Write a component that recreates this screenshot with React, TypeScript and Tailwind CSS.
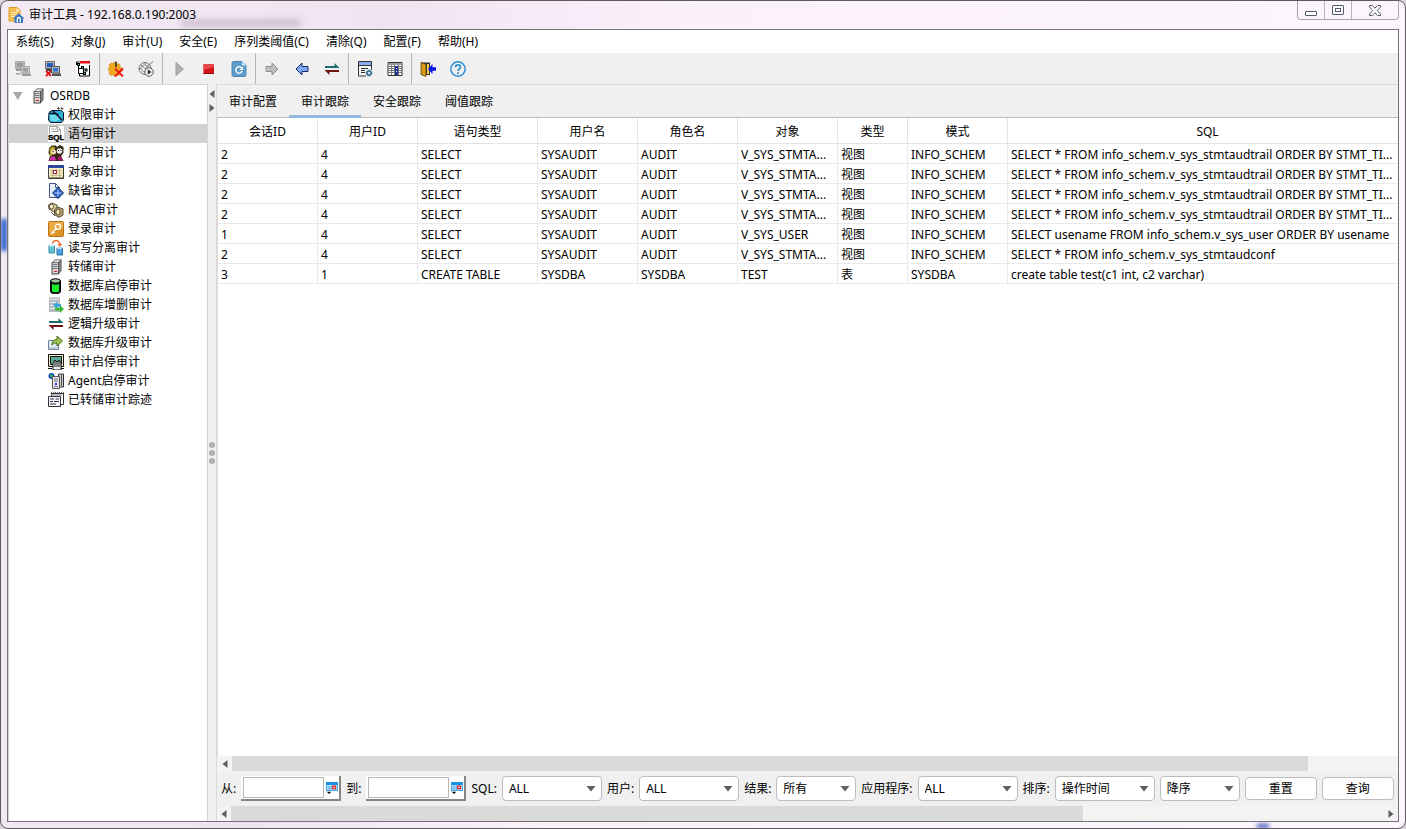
import React, { useState } from "react";

type IconProps = { name: string; size?: number };

const ServerTower = () => (
  <g>
    <path d="M4 3.500 7 .5h6.500v11l-3 4H3.500v-12z" fill="#444" />
    <path d="M4.500 4h5.500v10.500h-5.500z" fill="#d4d4d4" />
    <path d="M5 3.200 7.300 1.200h5.200l-2.200 2z" fill="#eee" />
    <path d="M10.700 4l2.200-2.200v9.400l-2.200 3z" fill="#808080" />
    <path d="M5 5.500h4.500M5 7.500h4.500M5 9.500h4.500" stroke="#777" />
    <path d="M6 12.500h3" stroke="#e02020" />
  </g>
);

const Swap = () => (
  <g>
    <path d="M1 5h9.500V2L15.500 7H1z" fill="#1d6b6b" />
    <path d="M15 9H.5l5 5v-3H15z" fill="#6b1717" />
  </g>
);

const Monitors = ({ off = false }: { off?: boolean }) => (
  <g>
    <path d="M.5.5h9v7h-9z" fill="#b8b8b8" stroke={off ? "#aaa" : "#666"} />
    <path d="M2 2h6v4H2z" fill={off ? "#999" : "#1e5bc4"} />
    <path d="M1 8h8v2H1z" fill={off ? "#999" : "#444"} />
    <path d="M6.500 5.500h8v6.500h-8z" fill={off ? "#c4c4c4" : "#bbb"} stroke={off ? "#aaa" : "#555"} />
    <path d="M8 7h5v3.500H8z" fill={off ? "#9f9f9f" : "#2d72dc"} />
    <path d="M7 12.500h9v2.500H7z" fill={off ? "#999" : "#555"} />
    {off ? (
      <path d="M1 12h5v1.500H1z" fill="#aaa" />
    ) : (
      <path d="M1 10l5 5M6 10l-5 5" stroke="#e01010" strokeWidth="1.800" />
    )}
  </g>
);

const drawings: Record<string, React.ReactNode> = {
  app: (
    <g>
      <path d="M1 .5h8l3 3V14H1z" fill="#f6bf4d" stroke="#e09a28" />
      <path d="M8.500 1v3.500H12z" fill="#fff1cc" />
      <path d="M3 5.500h6M3 7.500h6M3 9.500h4" stroke="#fde9b8" />
      <path d="M5.500 11l5.200-4.800L16 11l-1 1v4H6.500v-4z" fill="#3a77bd" />
      <path d="M9.300 15.500V12c0-2 3-2 3 0v3.500" fill="none" stroke="#fff" strokeWidth="1.300" />
    </g>
  ),
  disconnected: <Monitors off />,
  disconnect: <Monitors />,
  tree: (
    <g>
      <path d="M1 1h14v14.500H4V13H1z" fill="#fff" />
      <path d="M4.500 1H1.500v3M14.500 4v11h-10v-3" fill="none" stroke="#000" />
      <path d="M5 0h10v2.500H5z" fill="#e81010" />
      <path d="M3.500 4v8.500H8M3.500 7.500H6M8.500 6.500v5.500" fill="none" stroke="#000" />
      <path d="M2 2h3v3H2zM6 5h3v3H6zM9.500 7.500h3v3h-3zM8 11h3v3H8z" fill="#000" />
      <path d="M3 3h1v1H3zM7 6h1v1H7zM10.500 8.500h1v1h-1zM9 12h1v1H9z" fill="#38d8a0" />
    </g>
  ),
  gearDelete: (
    <g>
      <path d="M5.500 1.500h3v2l2-1 2 2-1 2 3 .5v3l-3 .5 1 2-2 2-2-1-1 1.500H6L5 13.500l-2 1-2-2 1-2-1.500-1V7L2 6 1 4l2-2 2 1z" fill="#efa91e" stroke="#cc820c" strokeWidth=".6" />
      <path d="M8 .5v5.500" stroke="#333" strokeWidth="1.600" />
      <path d="M7 7.500l8 8M15 7.500l-8 8" stroke="#ed1515" strokeWidth="1.800" />
    </g>
  ),
  gearRun: (
    <g fill="none" stroke="#777">
      <circle cx="7" cy="7.500" r="6" fill="#e6e6e6" />
      <circle cx="7" cy="7.500" r="3.500" fill="#fafafa" stroke="#999" />
      <path d="M3 4l4 3.500L15 .5M7 1.500v2M1 7.500h2" />
      <circle cx="11" cy="11" r="4.200" fill="#f5f5f5" stroke="#555" />
      <path d="M9.800 8.500v5l3.700-2.500z" fill="#222" stroke="none" />
    </g>
  ),
  play: <path d="M5 1.500v13L12.500 8z" fill="#b0b0b0" stroke="#9c9c9c" />,
  stop: (
    <g>
      <path d="M2.500 3h10.500v10H2.500z" fill="#d41515" />
      <path d="M2.500 3H13v3L2.500 9z" fill="#e84848" />
      <path d="M2.500 12H13v1H2.500z" fill="#8e0909" />
    </g>
  ),
  refresh: (
    <g>
      <path d="M1 2A1.500 1.500 0 0 1 2.500.5H11l4 4v9.500a1.500 1.500 0 0 1-1.500 1.500h-11A1.500 1.500 0 0 1 1 14z" fill="#5f9cc9" stroke="#4a86b4" />
      <path d="M11 .5v4h4z" fill="#d6e9f6" />
      <path d="M10.500 7A3.200 3.200 0 1 0 11 10" fill="none" stroke="#fff" strokeWidth="1.400" />
      <path d="M12 5.500V9H8.500z" fill="#fff" />
    </g>
  ),
  next: <path d="M2 5.500h6V2l6 6-6 6v-3.500H2z" fill="#bdbdbd" stroke="#8f8f8f" />,
  prev: <path d="M14 5.500H8V2L2 8l6 6v-3.500h6z" fill="#7fa8ee" stroke="#122a6b" />,
  swap: <Swap />,
  form: (
    <g>
      <path d="M1.500.5h13v14.500h-13z" fill="#f4f4f4" stroke="#333" />
      <path d="M2 1h12v3H2z" fill="#86aef0" />
      <path d="M1.500 4.500h13M4 7.500h7M4 9.500h4M4 11.500h4" stroke="#333" />
      <path d="M9 9h7v7H9z" fill="#f0f0f0" />
      <circle cx="12" cy="12" r="2.200" fill="none" stroke="#45799c" strokeWidth="1.800" />
      <path d="M12 8.500v7M8.500 12h7" stroke="#45799c" />
      <circle cx="12" cy="12" r="1" fill="#fff" />
    </g>
  ),
  grid: (
    <g>
      <path d="M1 1.500h14v13H1z" fill="#fff" stroke="#333" />
      <path d="M1.500 2h13v2h-13z" fill="#999" />
      <path d="M1 5.500h14M1 7.500h14M1 9.500h14M1 11.500h14M4.500 4v10M7.500 4v10M11.500 4v10" stroke="#777" />
      <path d="M8 5h3v9H8z" fill="#1b2e9c" />
      <path d="M9 7h1v1H9zM9 10h1v1H9z" fill="#fff" />
    </g>
  ),
  exit: (
    <g>
      <path d="M1 1.500h9V14H1z" fill="#333" />
      <path d="M1 1.500l5 2v12l-5-2z" fill="#d99b13" stroke="#5c4104" strokeWidth=".8" />
      <path d="M7 3h2v10H7z" fill="#f4ca5a" />
      <path d="M16 6.200h-3.500V3L8 8l4.500 5V9.800H16z" fill="#0713ed" />
    </g>
  ),
  help: (
    <g fill="none" stroke="#2b8fd0">
      <circle cx="8" cy="8" r="7.200" strokeWidth="1.500" />
      <path d="M5.500 6.300c0-3.300 5-3.300 5 0 0 1.800-2.500 1.700-2.500 3.700" strokeWidth="1.700" />
      <path d="M8 11.200v1.800" strokeWidth="1.800" />
    </g>
  ),
  server: <ServerTower />,
  permission: (
    <g>
      <path d="M1 5.500 4 3.500h9.500l2 2V13l-2 2.500h-11L.5 13z" fill="#27b3cf" stroke="#113" />
      <path d="M1.500 8h10v4.500l-4 2-5-1z" fill="#6fdcec" />
      <path d="M5 4l9 9M1.500 6.500h6l3 1.500" stroke="#113" strokeWidth="1.500" fill="none" />
      <path d="M10.500 0v3M9 1.500h3M14 0v3M12.500 1.500h3" stroke="#444" strokeWidth=".8" />
    </g>
  ),
  sql: (
    <g>
      <path d="M0 0h16v16H0z" fill="#fff" />
      <path d="M1.500 8V.5h8l3 3V8" fill="none" stroke="#999" />
      <path d="M9 .5V4h3.500M3.500 3h4M3.500 5.500h7" fill="none" stroke="#999" />
      <text x="0" y="14" fontFamily="Liberation Sans, sans-serif" fontWeight="bold" fontSize="8" stroke="#000" strokeWidth=".4">
        SQL
      </text>
    </g>
  ),
  users: (
    <g>
      <path d="M1 3l3-2.500h4L9 2l3-2 3.500 2v6L13 11l2.500 5H.5L2 11 .5 8z" fill="#332b10" />
      <path d="M1.500 3.500l3.500-2 2 1v2L4 6v5H2z" fill="#b9a527" />
      <circle cx="5.500" cy="7" r="2.500" fill="#f7dfb4" />
      <circle cx="11.500" cy="6" r="2.800" fill="#eee" />
      <path d="M10 5h1v1h-1zM12.500 5h1v1h-1zM4.500 6h1v1h-1z" fill="#111" />
      <path d="M1 15.500l2-4h4l1 4z" fill="#d22cb0" />
      <path d="M9 15.500l1.500-4h3l1.500 4z" fill="#a51c6e" />
    </g>
  ),
  object: (
    <g>
      <path d="M.5 1.500h15v13H.5z" fill="#f5efc6" stroke="#444" />
      <path d="M0 1h16v3H0z" fill="#2c489e" />
      <path d="M2 6.500h12M2 9h12M2 11.500h12M4.500 5v8M8 5v8M11.500 5v8" stroke="#b9ad77" strokeWidth=".7" />
      <path d="M5.500 6.500h3v3h-3z" fill="#fff" stroke="#a01840" />
      <path d="M1 14h14.500V4" fill="none" stroke="#3a3524" />
    </g>
  ),
  defaults: (
    <g>
      <path d="M1.500.5h6l4 4v10h-10z" fill="#e9eefb" stroke="#46568a" />
      <path d="M7.500.5v4h4" fill="none" stroke="#46568a" />
      <path d="M10 4.500l5.500 5.500-5.500 5.500L4.500 10z" fill="#265ec3" stroke="#12306f" />
      <path d="M10 6.500v7M6.500 10h7" stroke="#b9d3ff" />
    </g>
  ),
  mac: (
    <g stroke="#463d2c" strokeWidth=".9">
      <path d="M.5 3l3-2L9 3v5L6 10 1 7z" fill="#dccb93" />
      <ellipse cx="3.500" cy="4.500" rx="2" ry="2.500" fill="#fff6d4" />
      <path d="M6.500 8l3-3L15 7v6l-4 2.500-4.500-3z" fill="#bba66f" />
      <ellipse cx="10" cy="10" rx="2.200" ry="3" fill="#f3e3aa" />
      <path d="M3 10l4 4" stroke="#555" />
    </g>
  ),
  login: (
    <g>
      <rect x=".5" y=".5" width="15" height="15" rx="1" fill="#dc9328" stroke="#b87315" />
      <path d="M1 1h14v6L1 12z" fill="#eca947" />
      <circle cx="10" cy="5.800" r="2.600" fill="none" stroke="#fff" strokeWidth="1.300" />
      <path d="M8.200 7.700L3.500 12.400v1M5 11l1.500 1.500" fill="none" stroke="#fff" strokeWidth="1.300" />
    </g>
  ),
  split: (
    <g>
      <path d="M1 5.500h5.500V13H1z" fill="#65bfd1" stroke="#3c91a8" />
      <ellipse cx="3.700" cy="5.500" rx="2.700" ry="1.200" fill="#c2f0f6" />
      <path d="M9 8h5.500v7H9z" fill="#4aa0df" stroke="#2b74af" />
      <ellipse cx="11.700" cy="8" rx="2.700" ry="1.200" fill="#bbdfff" />
      <path d="M4.500 3.500c1-4 6.500-4 7.500 1" fill="none" stroke="#ed6a24" strokeWidth="1.500" />
      <path d="M9.500 4H14l-2 3z" fill="#ed6a24" />
    </g>
  ),
  dbRun: (
    <g>
      <path d="M2.500 3c0-3 10-3 10 0v10.500c0 3-10 3-10 0z" fill="#111" stroke="#000" />
      <ellipse cx="7.500" cy="2.800" rx="4.200" ry="1.600" fill="#9cc79c" />
      <path d="M4 6c2 1 5 1 7 0v7.500c-2 1-5 1-7 0z" fill="#16ed25" />
    </g>
  ),
  dbEdit: (
    <g>
      <path d="M1 .5h11V15H1z" fill="#b4b7bd" />
      <path d="M2 2.500h9M2 5.500h9M2 8.500h9M2 11.500h9" stroke="#eef0f3" />
      <path d="M5 8l4.500-3.500V7H13v2.500H9.500V12z" fill="#38a5de" />
      <path d="M16 12l-4-3.500V11H7v2.500h5V16z" fill="#35be32" />
    </g>
  ),
  upgrade: (
    <g>
      <path d="M.5 5.500h10v9H.5z" fill="#dfeaf4" stroke="#72849a" />
      <path d="M1 13h9" stroke="#9ab2c8" />
      <path d="M4 10c0-4 2-5.500 5-5.500V1l5.500 5L9 11V8C7 8 5.500 8 4 10z" fill="#9cc650" stroke="#466b17" />
    </g>
  ),
  auditSwitch: (
    <g>
      <path d="M.5.5h15v12H.5z" fill="#f3ecbd" stroke="#111" />
      <path d="M2.500 2.500h11v8h-11z" fill="#58a894" stroke="#111" />
      <path d="M5 16V9l2-3 2 2 2-2 2 3v7z" fill="#eee" stroke="#111" />
      <path d="M7 7v6M9 8v5M11 7v6" fill="none" stroke="#111" />
      <path d="M0 14.500h4M13 14.500h3" fill="none" stroke="#111" />
    </g>
  ),
  agent: (
    <g>
      <circle cx="3.500" cy="3" r="3" fill="#1740d6" />
      <path d="M2 2l2-1 1 2-2 2z" fill="#28c23a" />
      <path d="M10.500 1h5v13h-5z" fill="#ccc" stroke="#333" />
      <path d="M13.500 2v11" stroke="#555" />
      <path d="M4.500 3.500h7v12h-7z" fill="#e6e6ec" stroke="#555" />
      <path d="M6 6h4M6 8h4M6 13.500h4" stroke="#777" />
      <path d="M7 10h2v2H7z" fill="#2233d8" />
    </g>
  ),
  dumped: (
    <g>
      <path d="M3.500 1.500h12v11h-12z" fill="#fff" stroke="#333" />
      <path d="M3 1h13" stroke="#333" strokeWidth="1.500" strokeDasharray="1 1" />
      <path d="M.5 4.500h12v10H.5z" fill="#f4f4ff" stroke="#333" />
      <path d="M2 7h4M7.500 7H11M2 9.500h3M6 9.500h5M2 12h6" stroke="#334" />
      <path d="M3 3h11" stroke="#778" />
    </g>
  ),
  calendar: (
    <g>
      <path d="M0 0h16v12H0z" fill="#1b91e4" />
      <path d="M1 4h14v7H1z" fill="#d8efff" />
      <path d="M1 6.500h14M1 9h14M4 4v7M7.500 4v7M11 4v7" stroke="#4aa6e6" />
      <path d="M9 5.500h3.500V9H9z" fill="#fff" stroke="#e11" strokeWidth="1.500" />
      <path d="M1 13h6l-3 3z" fill="#000" />
    </g>
  ),
};

const Icon: React.FC<IconProps> = ({ name, size = 16 }) => (
  <svg width={size} height={size} viewBox="0 0 16 16" className="shrink-0" aria-hidden="true">
    {drawings[name]}
  </svg>
);

const menus = [
  "系统(S)",
  "对象(J)",
  "审计(U)",
  "安全(E)",
  "序列类阈值(C)",
  "清除(Q)",
  "配置(F)",
  "帮助(H)",
];

const toolGroups = [
  [
    { icon: "disconnected", label: "连接" },
    { icon: "disconnect", label: "断开" },
    { icon: "tree", label: "对象树" },
  ],
  [
    { icon: "gearDelete", label: "删除" },
    { icon: "gearRun", label: "启用" },
  ],
  [
    { icon: "play", label: "开始" },
    { icon: "stop", label: "停止" },
    { icon: "refresh", label: "刷新" },
  ],
  [
    { icon: "next", label: "前进" },
    { icon: "prev", label: "后退" },
    { icon: "swap", label: "切换" },
  ],
  [
    { icon: "form", label: "配置" },
    { icon: "grid", label: "列" },
  ],
  [
    { icon: "exit", label: "退出" },
    { icon: "help", label: "帮助" },
  ],
];

const treeItems = [
  { name: "权限审计", icon: "permission" },
  { name: "语句审计", icon: "sql" },
  { name: "用户审计", icon: "users" },
  { name: "对象审计", icon: "object" },
  { name: "缺省审计", icon: "defaults" },
  { name: "MAC审计", icon: "mac" },
  { name: "登录审计", icon: "login" },
  { name: "读写分离审计", icon: "split" },
  { name: "转储审计", icon: "server" },
  { name: "数据库启停审计", icon: "dbRun" },
  { name: "数据库增删审计", icon: "dbEdit" },
  { name: "逻辑升级审计", icon: "swap" },
  { name: "数据库升级审计", icon: "upgrade" },
  { name: "审计启停审计", icon: "auditSwitch" },
  { name: "Agent启停审计", icon: "agent" },
  { name: "已转储审计踪迹", icon: "dumped" },
];

const tabs = ["审计配置", "审计跟踪", "安全跟踪", "阈值跟踪"];

const columns = [
  { name: "会话ID", width: "w-[100px]" },
  { name: "用户ID", width: "w-[100px]" },
  { name: "语句类型", width: "w-[120px]" },
  { name: "用户名", width: "w-[100px]" },
  { name: "角色名", width: "w-[100px]" },
  { name: "对象", width: "w-[100px]" },
  { name: "类型", width: "w-[70px]" },
  { name: "模式", width: "w-[100px]" },
  { name: "SQL", width: "w-[400px]" },
];

const trailSql = "SELECT * FROM info_schem.v_sys_stmtaudtrail ORDER BY STMT_TI...";
const trailRow = ["2", "4", "SELECT", "SYSAUDIT", "AUDIT", "V_SYS_STMTA...", "视图", "INFO_SCHEM", trailSql];

const rows = [
  trailRow,
  trailRow,
  trailRow,
  trailRow,
  ["1", "4", "SELECT", "SYSAUDIT", "AUDIT", "V_SYS_USER", "视图", "INFO_SCHEM", "SELECT usename FROM info_schem.v_sys_user ORDER BY usename"],
  ["2", "4", "SELECT", "SYSAUDIT", "AUDIT", "V_SYS_STMTA...", "视图", "INFO_SCHEM", "SELECT * FROM info_schem.v_sys_stmtaudconf"],
  ["3", "1", "CREATE TABLE", "SYSDBA", "SYSDBA", "TEST", "表", "SYSDBA", "create table test(c1 int, c2 varchar)"],
];

const Arrow = ({ dir }: { dir: "left" | "right" }) => (
  <svg width="6" height="8" viewBox="0 0 6 8" aria-hidden="true">
    <path d={dir === "left" ? "M5.500 0v8L.5 4z" : "M.5 0v8l5-4z"} fill="#606060" />
  </svg>
);

const DateField = ({ id, label }: { id: string; label: string }) => (
  <>
    <label htmlFor={id}>{label}</label>
    <div className="flex h-[25px] w-[100px] shrink-0 items-center border-b-2 border-r-2 border-[#858585] bg-white pl-0.5">
      <input id={id} className="h-[21px] w-0 flex-1 border border-[#b8b8b8] bg-white px-1 outline-none" />
      <button type="button" aria-label="选择日期" className="flex w-[15px] justify-center">
        <Icon name="calendar" size={12} />
      </button>
    </div>
  </>
);

const Select = ({
  id,
  label,
  value,
  width,
}: {
  id: string;
  label?: string;
  value: string;
  width: string;
}) => (
  <>
    {label ? <label htmlFor={id}>{label}</label> : null}
    <div className={`relative shrink-0 ${width}`}>
      <select
        id={id}
        aria-label={label ? undefined : "排序方向"}
        className="h-[25px] w-full appearance-none rounded border border-[#bdbdbd] bg-white pl-1.5 outline-none"
      >
        <option>{value}</option>
      </select>
      <svg
        width="10"
        height="6"
        viewBox="0 0 10 6"
        className="pointer-events-none absolute right-1.5 top-[10px]"
        aria-hidden="true"
      >
        <path d="M.5 0h9L5 5.500z" fill="#606060" />
      </svg>
    </div>
  </>
);

const TitleBar = () => (
  <div className="relative flex h-7 shrink-0 justify-between">
    <div className="flex items-center gap-[5px] pl-px">
      <Icon name="app" />
      <span>审计工具 - 192.168.0.190:2003</span>
    </div>
    <div className="flex h-[19px] rounded-b border border-t-0 border-[#a8a2ad]">
      <button aria-label="最小化" className="flex w-[27px] items-center justify-center border-r border-[#b9b2bd]">
        <svg width="12" height="5" viewBox="0 0 12 5" className="mt-1.5">
          <rect x=".5" y=".5" width="11" height="4" rx=".5" fill="#fff" stroke="#555a6b" />
        </svg>
      </button>
      <button aria-label="最大化" className="flex w-[27px] items-center justify-center border-r border-[#b9b2bd]">
        <svg width="12" height="10" viewBox="0 0 12 10">
          <rect x=".5" y=".5" width="11" height="9" rx=".5" fill="#fff" stroke="#555a6b" />
          <rect x="3.500" y="3.500" width="5" height="3" fill="#fff" stroke="#555a6b" />
        </svg>
      </button>
      <button aria-label="关闭" className="flex w-[46px] items-center justify-center">
        <svg width="12" height="11" viewBox="0 0 12 11">
          <path
            d="M.5.5h3L6 3.200 8.500.5h3v1.500L8.300 5.500l3.200 3.500v1.500h-3L6 7.800 3.500 10.500h-3V9l3.200-3.500L.5 2z"
            fill="#fff"
            stroke="#555a6b"
          />
        </svg>
      </button>
    </div>
  </div>
);

const App: React.FC = () => {
  const [selected, setSelected] = useState("语句审计");
  const [activeTab, setActiveTab] = useState("审计跟踪");

  return (
    <div className="bg-[#d8d4da] font-['Noto_Sans','Noto_Sans_CJK_SC',sans-serif] text-[12px] leading-4 text-black">
      <div className="relative flex h-screen flex-col overflow-hidden rounded-lg border border-[#5e585f] bg-[linear-gradient(100deg,#f3eaf4_0%,#f0e4f1_25%,#fbf1fb_45%,#fdf6ff_100%)] px-1.5 pb-1.5">
        {/* colour showing through the glass frame */}
        <div className="absolute left-0 top-[218px] h-8 w-1.5 bg-[#2559cf] blur-[2px]" />
        <div className="absolute bottom-0 right-[136px] h-1 w-3 bg-[#3750b5] blur-[2px]" />
        <div className="absolute left-[180px] top-[18px] h-2 w-[120px] bg-[#b9a9bd]/60 blur-[3px]" />

        <TitleBar />

        <div className="relative flex min-h-0 flex-1 flex-col border border-[#77727a] bg-[#f0f0f0]">
          <nav className="flex h-[23px] shrink-0 items-center gap-px bg-white pt-px">
            {menus.map((menu) => (
              <button key={menu} className="whitespace-nowrap px-2">
                {menu}
              </button>
            ))}
          </nav>

          <div className="flex h-[31px] shrink-0">
            {toolGroups.map((group, index) => (
              <React.Fragment key={index}>
                {index > 0 ? <div className="mx-px w-px bg-[#b4b4b4]" /> : null}
                {group.map((tool) => (
                  <button
                    key={tool.icon}
                    aria-label={tool.label}
                    className="flex w-[30px] items-center justify-center"
                  >
                    <Icon name={tool.icon} />
                  </button>
                ))}
              </React.Fragment>
            ))}
          </div>

          <div className="flex min-h-0 flex-1">
            <aside className="w-[200px] shrink-0 border border-b-0 border-[#d4d4d4] bg-white pt-px">
              <div className="flex h-[19px] items-center pl-1">
                <svg width="10" height="8" viewBox="0 0 10 8" aria-hidden="true">
                  <path d="M0 0h9.500L4.800 8z" fill="#a8a8a8" />
                </svg>
                <span className="ml-[7px] mr-1 flex">
                  <Icon name="server" />
                </span>
                OSRDB
              </div>
              {treeItems.map((item) => (
                <button
                  key={item.name}
                  onClick={() => setSelected(item.name)}
                  className={`flex h-[19px] w-full items-center gap-1 pl-[39px] text-left ${
                    selected === item.name ? "bg-[#d2d2d2]" : ""
                  }`}
                >
                  <Icon name={item.icon} />
                  {item.name}
                </button>
              ))}
            </aside>

            <div className="relative flex w-2 shrink-0 flex-col items-center justify-center gap-0.5">
              <div className="absolute left-px top-1.5 flex flex-col gap-1.5">
                <Arrow dir="left" />
                <Arrow dir="right" />
              </div>
              <span className="size-1.5 rounded-full bg-[#b0b0b0]" />
              <span className="size-1.5 rounded-full bg-[#b0b0b0]" />
              <span className="size-1.5 rounded-full bg-[#b0b0b0]" />
            </div>

            <main className="flex min-w-0 flex-1 flex-col border-l border-t border-[#dadada]">
              <div className="flex h-[33px] shrink-0 border-b border-[#bcbcbc]">
                {tabs.map((tab) => (
                  <button
                    key={tab}
                    onClick={() => setActiveTab(tab)}
                    className={`-mb-px w-[72px] border-b-3 pt-[3px] ${
                      activeTab === tab ? "border-[#93b8de]" : "border-transparent"
                    }`}
                  >
                    {tab}
                  </button>
                ))}
              </div>

              <div className="min-h-0 flex-1 overflow-hidden border-l border-[#dadada] bg-white">
                <table className="w-[1190px] table-fixed border-separate border-spacing-0">
                  <thead>
                    <tr className="h-[26px]">
                      {columns.map((column) => (
                        <th
                          key={column.name}
                          className={`border-b border-r border-[#e4e4e4] p-0 pt-0.5 font-normal ${column.width}`}
                        >
                          {column.name}
                        </th>
                      ))}
                    </tr>
                  </thead>
                  <tbody>
                    {rows.map((row, index) => (
                      <tr key={index} className="h-5">
                        {row.map((cell, cellIndex) => (
                          <td
                            key={cellIndex}
                            className="whitespace-nowrap border-b border-r border-[#e9e9e9] pb-0 pl-[3px] pr-0 pt-0.5"
                          >
                            {cell}
                          </td>
                        ))}
                      </tr>
                    ))}
                  </tbody>
                </table>
              </div>

              <div className="flex h-[15px] shrink-0 bg-[#f3f3f3]">
                <button aria-label="向左滚动" className="flex w-[15px] items-center justify-center">
                  <Arrow dir="left" />
                </button>
                <div className="mr-[90px] flex-1 bg-[#dadada]" />
              </div>

              <form
                className="flex h-[35px] shrink-0 items-center gap-[5px] overflow-hidden whitespace-nowrap pl-1"
                onSubmit={(event) => event.preventDefault()}
              >
                <DateField id="from" label="从:" />
                <DateField id="to" label="到:" />
                <Select id="sql" label="SQL:" value="ALL" width="w-[100px]" />
                <Select id="user" label="用户:" value="ALL" width="w-[100px]" />
                <Select id="result" label="结果:" value="所有" width="w-20" />
                <Select id="program" label="应用程序:" value="ALL" width="w-[100px]" />
                <Select id="order" label="排序:" value="操作时间" width="w-[100px]" />
                <Select id="direction" value="降序" width="w-20" />
                <button type="reset" className="h-[23px] w-[72px] shrink-0 rounded border border-[#bdbdbd] bg-white">
                  重置
                </button>
                <button type="submit" className="h-[23px] w-[72px] shrink-0 rounded border border-[#bdbdbd] bg-white">
                  查询
                </button>
              </form>

              <div className="flex h-[15px] shrink-0 bg-[#f3f3f3]">
                <button aria-label="向左滚动" className="flex w-3.5 items-center justify-center">
                  <Arrow dir="left" />
                </button>
                <div className="flex flex-1">
                  <div className="w-[74%] bg-[#dadada]" />
                </div>
                <button aria-label="向右滚动" className="flex w-[15px] items-center justify-center">
                  <Arrow dir="right" />
                </button>
              </div>
            </main>
          </div>
        </div>
      </div>
    </div>
  );
};

export default App;
